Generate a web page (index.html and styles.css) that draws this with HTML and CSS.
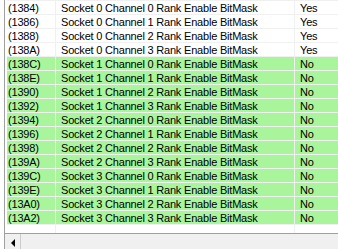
FILE: index.html
```html
<!DOCTYPE html>
<html lang="en">
<head>
    <meta charset="UTF-8">
    <meta name="viewport" content="width=device-width, initial-scale=1.0">
    <title>Rank Enable BitMask</title>
    <link rel="stylesheet" href="styles.css">
</head>
<body>
    <div class="list">
        <div class="view">
            <div class="row"><span class="cell addr">(1384)</span><span class="cell name">Socket 0 Channel 0 Rank Enable BitMask</span><span class="cell val">Yes</span></div>
            <div class="row"><span class="cell addr">(1386)</span><span class="cell name">Socket 0 Channel 1 Rank Enable BitMask</span><span class="cell val">Yes</span></div>
            <div class="row"><span class="cell addr">(1388)</span><span class="cell name">Socket 0 Channel 2 Rank Enable BitMask</span><span class="cell val">Yes</span></div>
            <div class="row"><span class="cell addr">(138A)</span><span class="cell name">Socket 0 Channel 3 Rank Enable BitMask</span><span class="cell val">Yes</span></div>
            <div class="row changed"><span class="cell addr">(138C)</span><span class="cell name">Socket 1 Channel 0 Rank Enable BitMask</span><span class="cell val">No</span></div>
            <div class="row changed"><span class="cell addr">(138E)</span><span class="cell name">Socket 1 Channel 1 Rank Enable BitMask</span><span class="cell val">No</span></div>
            <div class="row changed"><span class="cell addr">(1390)</span><span class="cell name">Socket 1 Channel 2 Rank Enable BitMask</span><span class="cell val">No</span></div>
            <div class="row changed"><span class="cell addr">(1392)</span><span class="cell name">Socket 1 Channel 3 Rank Enable BitMask</span><span class="cell val">No</span></div>
            <div class="row changed"><span class="cell addr">(1394)</span><span class="cell name">Socket 2 Channel 0 Rank Enable BitMask</span><span class="cell val">No</span></div>
            <div class="row changed"><span class="cell addr">(1396)</span><span class="cell name">Socket 2 Channel 1 Rank Enable BitMask</span><span class="cell val">No</span></div>
            <div class="row changed"><span class="cell addr">(1398)</span><span class="cell name">Socket 2 Channel 2 Rank Enable BitMask</span><span class="cell val">No</span></div>
            <div class="row changed"><span class="cell addr">(139A)</span><span class="cell name">Socket 2 Channel 3 Rank Enable BitMask</span><span class="cell val">No</span></div>
            <div class="row changed"><span class="cell addr">(139C)</span><span class="cell name">Socket 3 Channel 0 Rank Enable BitMask</span><span class="cell val">No</span></div>
            <div class="row changed"><span class="cell addr">(139E)</span><span class="cell name">Socket 3 Channel 1 Rank Enable BitMask</span><span class="cell val">No</span></div>
            <div class="row changed"><span class="cell addr">(13A0)</span><span class="cell name">Socket 3 Channel 2 Rank Enable BitMask</span><span class="cell val">No</span></div>
            <div class="row changed"><span class="cell addr">(13A2)</span><span class="cell name">Socket 3 Channel 3 Rank Enable BitMask</span><span class="cell val">No</span></div>
            <div class="row blank"><span class="cell"></span><span class="cell"></span><span class="cell"></span></div>
        </div>
        <div class="hscroll">
            <div class="scroll-btn"><span class="arrow-left"></span></div>
        </div>
    </div>
</body>
</html>
```

FILE: styles.css
```css
body {
    margin: 0;
    background: #fff;
    font-family: "Liberation Sans", Arial, sans-serif;
    font-size: 11px;
    color: #000;
    overflow: hidden;
}
.list {
    margin-left: 4px;
    border-left: 1px solid #a0a0a0;
    height: 249px;
    display: flex;
    flex-direction: column;
}
.view {
    padding-left: 2px;
    background: #fff;
}
.row {
    display: grid;
    grid-template-columns: 49px 239px 1fr;
    border-top: 1px solid #f0f0f0;
    height: 13px;
}
.row.changed {
    background: #a8f59b;
}
.row.blank {
    height: 8px;
}
.cell {
    box-sizing: border-box;
    height: 13px;
    line-height: 14px;
    white-space: nowrap;
    letter-spacing: -0.2px;
}
.blank .cell {
    height: 8px;
}
.cell:nth-child(1),
.cell:nth-child(2) {
    border-right: 1px solid #f0f0f0;
}
.addr {
    padding-left: 1px;
}
.name,
.val {
    padding-left: 5px;
}
.hscroll {
    flex: 1;
    background: #f0f0f0;
    border-top: 1px solid #a0a0a0;
    display: flex;
}
.scroll-btn {
    width: 15px;
    border-right: 1px solid #cdcdcd;
    display: flex;
    align-items: center;
    justify-content: center;
    padding-top: 3px;
}
.arrow-left {
    width: 0;
    height: 0;
    border-top: 4px solid transparent;
    border-bottom: 4px solid transparent;
    border-right: 4px solid #000;
}
```
